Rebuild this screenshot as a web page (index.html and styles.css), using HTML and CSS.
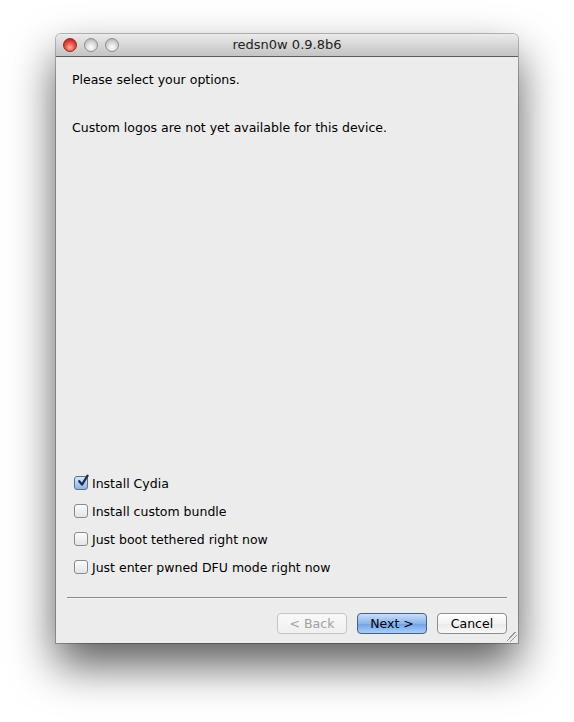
FILE: index.html
```html
<!DOCTYPE html>
<html>
<head>
<meta charset="utf-8">
<link rel="stylesheet" href="styles.css">
</head>
<body>
<div class="window">
  <div class="titlebar">
    <div class="lights">
      <span class="light red"></span>
      <span class="light gray"></span>
      <span class="light gray"></span>
    </div>
    <div class="title">redsn0w 0.9.8b6</div>
  </div>
  <div class="content">
    <p class="line first">Please select your options.</p>
    <p class="line second">Custom logos are not yet available for this device.</p>
    <div class="spacer"></div>
    <div class="options">
      <label class="opt"><span class="box checked"><svg viewBox="0 0 14 14" width="14" height="14"><path d="M3.2 7.2 L6 10.6 L11.6 1.6" fill="none" stroke="#1b2a4a" stroke-width="2.2" stroke-linecap="round" stroke-linejoin="round"/></svg></span>Install Cydia</label>
      <label class="opt"><span class="box"></span>Install custom bundle</label>
      <label class="opt"><span class="box"></span>Just boot tethered right now</label>
      <label class="opt"><span class="box"></span>Just enter pwned DFU mode right now</label>
    </div>
    <div class="sep"></div>
    <div class="buttons">
      <button class="btn disabled">&lt; Back</button>
      <button class="btn primary">Next &gt;</button>
      <button class="btn">Cancel</button>
    </div>
    <div class="grip"></div>
  </div>
</div>
</body>
</html>
```
FILE: styles.css
```css
html, body {
  margin: 0;
  padding: 0;
  background: #ffffff;
  width: 574px;
  height: 722px;
  overflow: hidden;
}
body {
  font-family: "DejaVu Sans", "Liberation Sans", sans-serif;
  font-size: 12.5px;
  color: #000;
  padding-top: 34px;
  padding-left: 56px;
  box-sizing: border-box;
}
.window {
  width: 462px;
  height: 609px;
  border-radius: 5px 5px 0 0;
  box-shadow: 0 22px 45px rgba(0,0,0,0.65), 0 0 0 1px rgba(0,0,0,0.25);
  display: flex;
  flex-direction: column;
  background: #ececec;
  overflow: hidden;
}
.titlebar {
  height: 22px;
  flex: none;
  background: linear-gradient(#ebebeb, #d2d2d2 60%, #c4c4c4);
  border-bottom: 1px solid #5c5c5c;
  position: relative;
  display: flex;
  align-items: center;
}
.lights {
  display: flex;
  gap: 7px;
  padding-left: 7px;
}
.light {
  width: 14px;
  height: 14px;
  border-radius: 50%;
  box-sizing: border-box;
}
.light.red {
  background: radial-gradient(circle at 50% 70%, #ffb3a8 0, #f0594c 40%, #c3261b 80%);
  border: 1px solid #8c2b24;
}
.light.gray {
  background: radial-gradient(circle at 50% 70%, #ffffff 0, #dcdcdc 45%, #b4b4b4 85%);
  border: 1px solid #8e8e8e;
}
.title {
  position: absolute;
  left: 0;
  right: 0;
  text-align: center;
  font-size: 13px;
  color: #222;
  top: 3px;
}
.content {
  flex: 1;
  display: flex;
  flex-direction: column;
  padding: 0 11px 0 11px;
  position: relative;
}
.line {
  margin: 0;
  padding-left: 5px;
  line-height: 16px;
}
.first { margin-top: 15px; }
.second { margin-top: 32px; }
.spacer { flex: 1; }
.options {
  display: flex;
  flex-direction: column;
  gap: 12px;
  padding-left: 7px;
  margin-bottom: 22px;
}
.opt {
  display: flex;
  align-items: center;
  height: 16px;
  gap: 4px;
}
.box {
  width: 14px;
  height: 14px;
  box-sizing: border-box;
  border: 1px solid #8a8a8a;
  border-radius: 3px;
  background: linear-gradient(#fdfdfd, #e4e4e4);
  position: relative;
  display: flex;
}
.box.checked {
  background: linear-gradient(#d6e8fb, #8ab6e6);
  border-color: #5b6f8c;
}
.box svg { position: absolute; left: 1px; top: -3px; }
.sep {
  background: #8a8a8a;
  border-bottom: 1px solid #f6f6f6;
  height: 1px;
}
.buttons {
  display: flex;
  justify-content: flex-end;
  gap: 10px;
  margin-top: 14px;
  margin-bottom: 9px;
}
.btn {
  width: 70px;
  height: 21px;
  border-radius: 4px;
  border: 1px solid #8e8e8e;
  background: linear-gradient(#ffffff, #f3f3f3 50%, #e9e9e9 51%, #f7f7f7);
  font-family: "DejaVu Sans", sans-serif;
  font-size: 12.5px;
  color: #000;
  padding: 0;
}
.btn.disabled {
  color: #a0a0a0;
  border-color: #c5c5c5;
  background: linear-gradient(#f8f8f8, #f0f0f0);
}
.btn.primary {
  border-color: #4a5f84;
  background: linear-gradient(#c9defa, #8bb6ec 50%, #6fa2e6 51%, #aacdf6);
}
.grip {
  position: absolute;
  right: 1px;
  bottom: 1px;
  width: 10px;
  height: 10px;
  background: linear-gradient(135deg, transparent 40%, #999 40%, #999 48%, transparent 48%, transparent 62%, #999 62%, #999 70%, transparent 70%);
}
```
